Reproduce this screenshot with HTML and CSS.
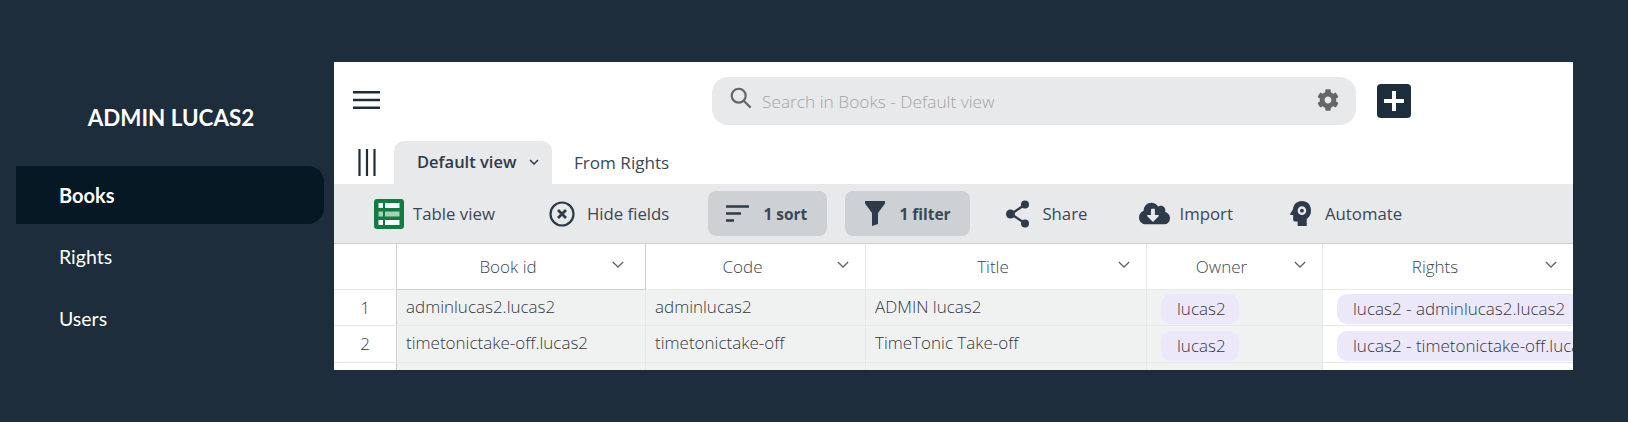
FILE: index.html
```html
<!DOCTYPE html>
<html lang="en">
<head>
<meta charset="utf-8">
<title>Books</title>
<link rel="stylesheet" href="styles.css">
</head>
<body>
<div class="page">
  <aside class="sidebar">
    <h1 class="brand">ADMIN LUCAS2</h1>
    <nav class="nav">
      <a class="nav-item active">Books</a>
      <a class="nav-item">Rights</a>
      <a class="nav-item">Users</a>
    </nav>
  </aside>
  <main class="panel">
    <header class="topbar">
      <svg class="burger" viewBox="0 0 27 18"><path d="M0 1.2h27M0 9h27M0 16.8h27"/></svg>
      <div class="search">
        <svg class="search-icon" viewBox="0 0 24 24"><circle cx="9.5" cy="9.5" r="7.6"/><path d="M15 15l7.5 7.5"/></svg>
        <span class="placeholder">Search in Books - Default view</span>
        <svg class="gear" viewBox="0 0 512 512"><path d="M487.4 315.7l-42.6-24.6c4.3-23.2 4.3-47 0-70.2l42.6-24.6c4.9-2.8 7.1-8.6 5.5-14-11.1-35.6-30-67.8-54.7-94.6-3.8-4.1-10-5.1-14.8-2.3L380.8 110c-17.9-15.4-38.5-27.3-60.8-35.1V25.8c0-5.6-3.9-10.5-9.4-11.7-36.7-8.2-74.3-7.8-109.2 0-5.5 1.2-9.4 6.1-9.4 11.7V75c-22.2 7.9-42.8 19.8-60.8 35.1L88.7 85.5c-4.9-2.8-11-1.9-14.8 2.3-24.7 26.7-43.6 58.9-54.7 94.6-1.7 5.4.6 11.2 5.5 14L67.3 221c-4.3 23.2-4.3 47 0 70.2l-42.6 24.6c-4.9 2.8-7.1 8.6-5.5 14 11.1 35.6 30 67.8 54.7 94.6 3.8 4.1 10 5.1 14.8 2.3l42.6-24.6c17.9 15.4 38.5 27.3 60.8 35.1v49.2c0 5.6 3.9 10.5 9.4 11.7 36.7 8.2 74.3 7.8 109.2 0 5.5-1.2 9.4-6.1 9.4-11.7v-49.2c22.2-7.9 42.8-19.8 60.8-35.1l42.6 24.6c4.9 2.8 11 1.9 14.8-2.3 24.7-26.7 43.6-58.9 54.7-94.6 1.5-5.5-.7-11.3-5.6-14.1zM256 336c-44.1 0-80-35.9-80-80s35.9-80 80-80 80 35.9 80 80-35.9 80-80 80z"/></svg>
      </div>
      <button class="add"><svg viewBox="0 0 20 20"><path d="M10 0v20M0 10h20"/></svg></button>
    </header>
    <div class="tabs">
      <svg class="bars" viewBox="0 0 18 27"><path d="M1.500 0v27M9 0v27M16.500 0v27"/></svg>
      <div class="tab current">Default view<svg class="tab-chev" viewBox="0 0 10 6"><path d="M1 1l4 4 4-4"/></svg></div>
      <div class="tab">From Rights</div>
    </div>
    <div class="toolbar">
      <div class="tool t-table">
        <svg class="i-table" viewBox="0 0 30 30"><rect width="30" height="30" rx="3" fill="#107c41"/><path fill="#fff" d="M4.500 4h4.500v5H4.500zM11 4h14.500v5H11zM4.500 21h4.500v5H4.500zM11 21h14.500v5H11z"/><path fill="#a9d0b7" d="M4.500 12.500h4.500v5H4.500zM11 12.500h14.500v5H11z"/></svg>
        Table view
      </div>
      <div class="tool t-hide">
        <svg class="i-hide" viewBox="0 0 26 26"><circle cx="13" cy="13" r="11.500"/><path d="M9 9l8 8M17 9l-8 8"/></svg>
        Hide fields
      </div>
      <div class="tool pressed t-sort">
        <svg class="i-sort" viewBox="0 0 23 17"><path d="M0 1.500h23M0 8.500h15M0 15.500h8"/></svg>
        1 sort
      </div>
      <div class="tool pressed t-filter">
        <svg class="i-filter" viewBox="0 0 20 25"><path d="M0 0h20v2.500l-7 9.500v11l-6 2V12L0 2.500z"/></svg>
        1 filter
      </div>
      <div class="tool t-share">
        <svg class="i-share" viewBox="0 0 24 28"><path class="line" d="M18.500 5L5 14l13.500 9"/><circle cx="19" cy="4.500" r="4"/><circle cx="4.500" cy="14" r="4.500"/><circle cx="19" cy="23.500" r="4"/></svg>
        Share
      </div>
      <div class="tool t-import">
        <svg class="i-import" viewBox="0 0 640 512"><path d="M537.600 226.600c4.100-10.700 6.400-22.400 6.400-34.600 0-53-43-96-96-96-19.700 0-38.100 6-53.300 16.200C367 64.200 315.300 32 256 32c-88.400 0-160 71.600-160 160 0 2.700.1 5.400.2 8.100C40.200 219.800 0 273.200 0 336c0 79.500 64.500 144 144 144h368c70.700 0 128-57.300 128-128 0-61.900-44-113.600-102.400-125.400zm-132.900 88.700L299.300 420.700c-6.200 6.200-16.400 6.200-22.600 0L171.300 315.300c-10.100-10.100-2.900-27.300 11.300-27.300H248V176c0-8.800 7.200-16 16-16h48c8.800 0 16 7.200 16 16v112h65.400c14.200 0 21.400 17.200 11.300 27.300z"/></svg>
        Import
      </div>
      <div class="tool t-auto">
        <svg class="i-auto" viewBox="0 0 22 26"><path fill-rule="evenodd" d="M12.500 0C7 0 3.500 3.800 3.200 8.500L.2 13.200c-.4.700 0 1.300.8 1.300h2.300v4.500c0 1.500 1 2.500 2.200 2.500h2.500v4.500h9.500v-7.300c2.700-2 4.500-4.700 4.500-8.700C22 4 18.300 0 12.500 0zm0 5.500a4.500 4.500 0 1 1 0 9 4.500 4.500 0 0 1 0-9z"/><circle cx="12.500" cy="10" r="2"/></svg>
        Automate
      </div>
    </div>
    <div class="grid">
      <div class="row head">
        <div class="cell idx"></div>
        <div class="cell col-book hcell sel">Book id<svg class="chev" viewBox="0 0 14 8"><path d="M1 1l6 6 6-6"/></svg></div>
        <div class="cell col-code hcell">Code<svg class="chev" viewBox="0 0 14 8"><path d="M1 1l6 6 6-6"/></svg></div>
        <div class="cell col-title hcell">Title<svg class="chev" viewBox="0 0 14 8"><path d="M1 1l6 6 6-6"/></svg></div>
        <div class="cell col-owner hcell">Owner<svg class="chev" viewBox="0 0 14 8"><path d="M1 1l6 6 6-6"/></svg></div>
        <div class="cell col-rights hcell">Rights<svg class="chev" viewBox="0 0 14 8"><path d="M1 1l6 6 6-6"/></svg></div>
      </div>
      <div class="row">
        <div class="cell idx">1</div>
        <div class="cell col-book body">adminlucas2.lucas2</div>
        <div class="cell col-code body">adminlucas2</div>
        <div class="cell col-title body">ADMIN lucas2</div>
        <div class="cell col-owner body"><span class="chip">lucas2</span></div>
        <div class="cell col-rights body"><span class="chip">lucas2 - adminlucas2.lucas2</span></div>
      </div>
      <div class="row">
        <div class="cell idx">2</div>
        <div class="cell col-book body">timetonictake-off.lucas2</div>
        <div class="cell col-code body">timetonictake-off</div>
        <div class="cell col-title body">TimeTonic Take-off</div>
        <div class="cell col-owner body"><span class="chip">lucas2</span></div>
        <div class="cell col-rights body"><span class="chip">lucas2 - timetonictake-off.lucas2</span></div>
      </div>
      <div class="row">
        <div class="cell idx"></div>
        <div class="cell col-book body"></div>
        <div class="cell col-code body"></div>
        <div class="cell col-title body"></div>
        <div class="cell col-owner body"></div>
        <div class="cell col-rights body"></div>
      </div>
    </div>
  </main>
</div>
</body>
</html>
```
FILE: styles.css
```css
* { box-sizing: border-box; }
html, body { margin: 0; height: 100%; }
body { background: #1e2d3b; font-family: "Open Sans", "Noto Sans", sans-serif; overflow: hidden; }
.page { display: flex; align-items: flex-start; width: 1628px; height: 422px; padding-top: 62px; padding-left: 16px; }
.sidebar { width: 318px; flex: none; color: #fff; }
.brand { margin: 0; padding: 44px 0 0 0; width: 310px; text-align: center; font: 700 22.400px/24px Lato, sans-serif; height: 104px; }
.nav { display: flex; flex-direction: column; }
.nav-item { display: flex; align-items: center; padding-left: 43px; height: 58px; font: 400 19.500px/24px Lato, sans-serif; width: 308px; margin-bottom: 4px; }
.nav-item.active { background: #051824; border-radius: 0 16px 16px 0; font-weight: 700; font-size: 20px; }
.panel { width: 1239px; height: 308px; background: #fff; overflow: hidden; flex: none; }
.topbar { display: flex; align-items: center; height: 79px; padding-bottom: 2px; }
.burger { width: 27px; height: 18px; margin: -2px 0 0 19px; fill: none; stroke: #1e2d3b; stroke-width: 2.400; flex: none; }
.search { display: flex; align-items: center; width: 644px; height: 48px; margin: 0 0 0 332px; background: #e8e9eb; border-radius: 16px; padding: 0 17px 0 18px; }
.search-icon { width: 22px; height: 22px; fill: none; stroke: #666; stroke-width: 2.400; margin-top: -6px; flex: none; }
.placeholder { margin-left: 10px; flex: 1; color: #a3a4a6; font: 300 17.300px/24px "Open Sans", sans-serif; margin-top: 3px; }
.gear { width: 22px; height: 22px; fill: #666; flex: none; margin-top: -2px; }
.add { width: 34px; height: 34px; margin: 0 0 0 21px; padding: 0; border: 0; border-radius: 4px; background: #1e2d3b; display: flex; align-items: center; justify-content: center; }
.add svg { width: 20px; height: 20px; fill: none; stroke: #fff; stroke-width: 4; }
.tabs { display: flex; align-items: flex-end; height: 43px; }
.bars { width: 18px; height: 27px; margin: 0 18px 8px 24px; fill: none; stroke: #1e2d3b; stroke-width: 2.200; flex: none; }
.tab { height: 43px; display: flex; align-items: center; font: 400 17.100px/24px "Open Sans", sans-serif; color: #3b4756; padding: 0 23px 0 22px; }
.tab.current { width: 158px; padding: 0 0 2px 23px; background: #e8e9eb; border-radius: 10px 10px 0 0; font-weight: 600; font-size: 16.500px; color: #2e3b4a; }
.tab-chev { width: 10px; height: 6px; margin-left: 13px; fill: none; stroke: #2e3b4a; stroke-width: 1.500; }
.toolbar { display: flex; align-items: center; height: 60px; background: #e8e9eb; border-bottom: 1px solid #cfcfcf; }
.tool { display: flex; align-items: center; height: 45px; font: 400 16.800px/24px "Open Sans", sans-serif; color: #3b4756; flex: none; }
.tool svg { flex: none; }
.pressed { background: #cdd1d4; border-radius: 8px; font-weight: 700; font-size: 15.500px; }
.t-table { margin-left: 40px; gap: 9px; }
.i-table { width: 30px; height: 30px; }
.t-hide { margin-left: 54px; gap: 12px; }
.i-hide { width: 26px; height: 26px; fill: none; stroke: #2e3b4a; stroke-width: 2.200; }
.i-hide path { stroke-width: 2.800; }
.t-sort { margin-left: 39px; width: 119px; padding-left: 18px; gap: 14px; }
.i-sort { width: 23px; height: 17px; fill: none; stroke: #2e3b4a; stroke-width: 2.400; }
.t-filter { margin-left: 18px; width: 125px; padding-left: 20px; gap: 14px; }
.i-filter { width: 20px; height: 25px; fill: #2e3b4a; }
.t-share { margin-left: 36px; gap: 12px; }
.i-share { width: 24px; height: 28px; fill: #2e3b4a; }
.i-share .line { fill: none; stroke: #2e3b4a; stroke-width: 2.400; }
.t-import { margin-left: 52px; gap: 9px; }
.i-import { width: 31px; height: 25px; fill: #2e3b4a; }
.t-auto { margin-left: 57px; gap: 14px; }
.i-auto { width: 21px; height: 25px; fill: #2e3b4a; }
.grid { font: 300 17px/24px "Open Sans", sans-serif; color: #33383e; }
.row { display: flex; height: 36px; white-space: nowrap; }
.row + .row + .row { height: 37px; }
.row.head { height: 46px; color: #3b4756; }
.cell { flex: none; display: flex; align-items: center; border-bottom: 1px solid #e7e8e9; border-right: 1px solid #e7e8e9; overflow: hidden; }
.idx { width: 63px; justify-content: center; border-right-color: #cfcfcf; background: #fff; }
.col-book { width: 249px; }
.col-code { width: 220px; }
.col-title { width: 281px; }
.col-owner { width: 176px; }
.col-rights { width: 250px; border-right: 0; }
.hcell { position: relative; justify-content: center; padding-right: 26px; background: #fff; }
.hcell.sel { border-right: 1px solid #cfcfcf; border-bottom: 1px solid #cfcfcf; }
.chev { position: absolute; right: 16px; top: 17px; width: 12px; height: 7px; fill: none; stroke: #666; stroke-width: 1.500; }
.sel .chev { right: 21px; }
.body { padding-left: 9px; padding-bottom: 2px; background: #f0f2f2; }
.col-owner.body, .col-rights.body { padding-left: 14px; padding-bottom: 0; }
.col-rights.body { background: #fff; }
.chip { display: inline-block; height: 30px; line-height: 30px; padding: 0 16px; background: #ece8fa; border-radius: 10px; margin-top: 3px; }
.col-owner .chip { width: 78px; }
```
